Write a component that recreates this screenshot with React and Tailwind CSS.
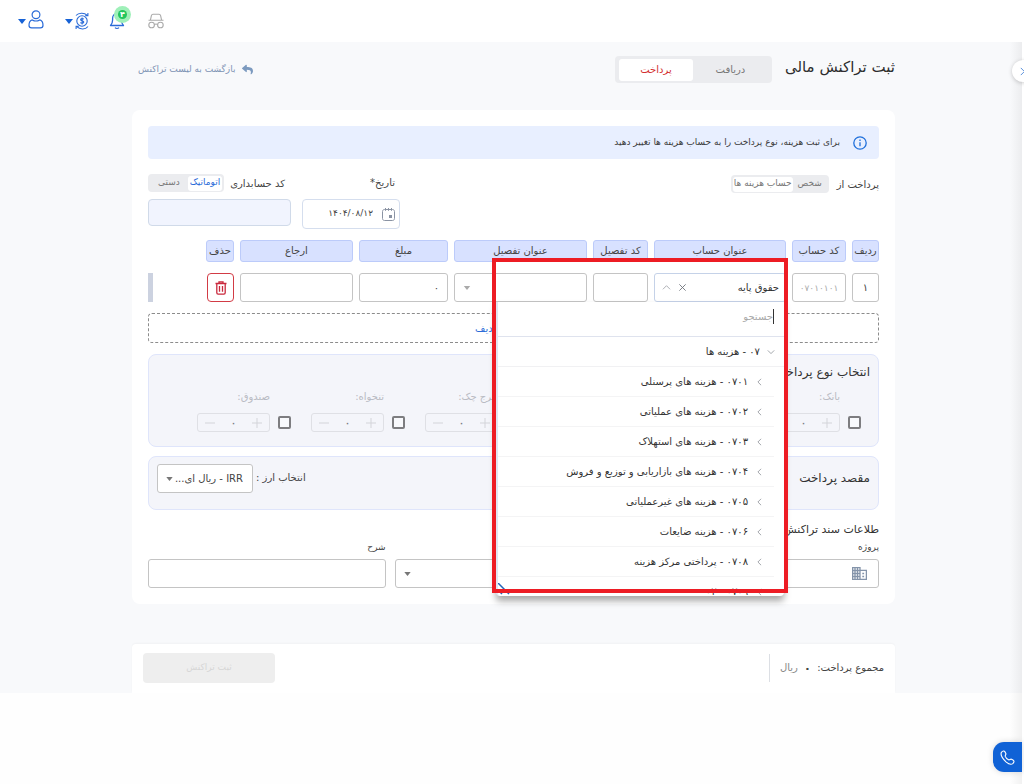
import React from "react";
import { FaReply } from "react-icons/fa";

const accounts = [
  "۰۷۰۱ - هزینه های پرسنلی",
  "۰۷۰۲ - هزینه های عملیاتی",
  "۰۷۰۳ - هزینه های استهلاک",
  "۰۷۰۴ - هزینه های بازاریابی و توزیع و فروش",
  "۰۷۰۵ - هزینه های غیرعملیاتی",
  "۰۷۰۶ - هزینه ضایعات",
  "۰۷۰۸ - پرداختی مرکز هزینه",
  "۰۷۰۹ - ۰۲",
];

const payTypes = ["بانک:", "چک:", "حواله:", "خرج چک:", "تنخواه:", "صندوق:"];

const fieldBox =
  "w-full rounded-[3px] border border-[#c4c4c4] bg-white text-[10px] text-[#444] outline-none";

function Caret({ className }) {
  return (
    <svg viewBox="0 0 8 5" className={className} aria-hidden="true">
      <path d="M0 0h8L4 5z" fill="currentColor" />
    </svg>
  );
}

function Chevron({ className, d = "M7 1 3 5l4 4" }) {
  return (
    <svg viewBox="0 0 10 10" className={className} fill="none" stroke="currentColor" strokeWidth="1" aria-hidden="true">
      <path d={d} />
    </svg>
  );
}

function TopBar() {
  return (
    <header dir="ltr" className="flex h-[42px] items-center bg-white pl-[18px] text-[#2a6bd8]">
      <button aria-label="حساب کاربری" className="flex items-center gap-[2px]">
        <Caret className="h-[5px] w-[8px] text-[#1762d6]" />
        <svg viewBox="0 0 16 20" className="-mt-[4px] h-[20px] w-[16px]" fill="none" stroke="currentColor" strokeWidth="1.2">
          <circle cx="8" cy="5.800" r="3.900" />
          <path d="M4.300 10.900C2 11.500 1 13.500 1 16.200c0 1.700.9 2.600 2.600 2.600h8.800c1.700 0 2.600-.9 2.600-2.600 0-2.700-1-4.700-3.300-5.300-2.200 1.300-5.200 1.300-7.400 0z" strokeLinejoin="round" />
        </svg>
      </button>
      <button aria-label="ارز" className="ml-[21px] flex items-center gap-[2px]">
        <Caret className="h-[5px] w-[8px] text-[#1762d6]" />
        <svg viewBox="0 0 14 18" className="h-[18px] w-[14px]" fill="none" stroke="currentColor" strokeWidth="1.1">
          <circle cx="7" cy="9" r="5.2" />
          <path d="M1 3.500C3.500.8 9 .2 12.300 3.300M12.900 1v2.600H10.300M13 14.500c-2.500 3.200-8 3.300-11.300.2M1.100 17v-2.600h2.600" />
          <path d="M8.700 7.200c-.4-.7-3.100-.9-3.100.5 0 1.600 3.200.8 3.200 2.400 0 1.400-2.900 1.300-3.400.3M7.100 5.400v7" />
        </svg>
      </button>
      <button aria-label="اعلان ها" className="relative ml-[20px] flex">
        <svg viewBox="0 0 16 20" className="-mt-[2px] h-[20px] w-[16px]" fill="none" stroke="currentColor" strokeWidth="1.300">
          <path d="M1.500 15.500C3 14 3.600 12.500 3.600 10V8.300C3.600 5.600 5.400 3.500 8 3.500s4.400 2.100 4.400 4.800V10c0 2.500.6 4 2.100 5.500z" strokeLinejoin="round" />
          <path d="M6 17.600c1 1 3 1 4 0" />
        </svg>
        <span className="absolute -top-[6px] left-[5px] flex h-[17px] w-[17px] items-center justify-center rounded-full bg-[#9ff0b9]">
          <span className="flex h-[9px] w-[9px] items-center justify-center rounded-full bg-[#22c55e] text-[8px] leading-none font-bold text-white">۴</span>
        </span>
      </button>
      <button aria-label="حالت ناشناس" className="ml-[23px] flex text-[#aaaaaa]">
        <svg viewBox="0 0 16 16" className="h-[16px] w-[16px]" fill="none" stroke="currentColor" strokeWidth="1.100">
          <path d="M.5 7.200h15M2.400 7.200l1-4.600c.2-.8.800-1.300 1.600-1.300h6c.8 0 1.400.5 1.600 1.300l1 4.600" />
          <circle cx="3.600" cy="12" r="2.800" />
          <circle cx="12.400" cy="12" r="2.800" />
          <path d="M6.400 11.700c.8-.7 2.400-.7 3.200 0" />
        </svg>
      </button>
    </header>
  );
}

function Stepper({ label }) {
  return (
    <div className="flex items-end gap-[8px]">
      <input type="checkbox" aria-label={label} className="mb-[3px] h-[13px] w-[13px] appearance-none rounded-[2px] border-2 border-[#7d7d80] bg-white/40" />
      <div className="flex w-[73px] flex-col gap-[8px]">
        <span className="text-[10px] leading-4 whitespace-nowrap text-[#b9bbc3]">{label}</span>
        <div className="flex h-[19px] items-center justify-between rounded-[3px] border border-[#dfe0e5] px-[7px] text-[#d3d4d9]">
          <button aria-label="افزایش" className="flex">
            <Chevron className="h-[10px] w-[10px]" d="M5 0v10M0 5h10" />
          </button>
          <span className="text-[12px] leading-none text-[#77787d]">۰</span>
          <button aria-label="کاهش" className="flex">
            <Chevron className="h-[10px] w-[10px]" d="M0 5h10" />
          </button>
        </div>
      </div>
    </div>
  );
}

function AccountMenu() {
  return (
    <div className="absolute top-[29px] right-[2px] z-20 h-[294px] w-[288px] overflow-hidden rounded-b-[4px] border-l-2 border-[#dfe6f2] bg-white shadow-[0_5px_7px_rgba(0,0,0,0.35)]">
      <div className="flex h-[35px] items-center border-b border-[#dfe3ee] pr-[10px] pb-[6px]">
        <span className="h-[15px] w-px bg-[#333]" />
        <input aria-label="جستجو" placeholder="جستجو" className="w-full text-[10px] outline-none placeholder:text-[#a9a9a9]" />
      </div>
      <ul className="text-[10px] text-[#333]">
        <li className="flex h-[30px] items-center gap-[7px] border-b border-[#f1f1f3] pr-[9px]">
          <Chevron className="h-[8px] w-[8px] text-[#8c9097]" d="M1 3l4 4 4-4" />
          ۰۷ - هزینه ها
        </li>
        {accounts.map((name) => (
          <li key={name} className="mr-[10px] flex h-[30px] items-center gap-[7px] border-b border-[#f4f4f5] pr-[10px]">
            <Chevron className="h-[8px] w-[9px] text-[#8c9097]" />
            {name}
          </li>
        ))}
      </ul>
      <svg viewBox="0 0 12 12" className="absolute bottom-[1px] left-0 h-[12px] w-[12px]" stroke="#2464b8" strokeWidth="1.500" aria-hidden="true">
        <path d="M0 0l11 11M0 7l4 4" />
      </svg>
    </div>
  );
}

const columns = [
  ["ردیف", "w-[27px]"],
  ["کد حساب", "w-[54px]"],
  ["عنوان حساب", "w-[132px]"],
  ["کد تفصیل", "w-[55px]"],
  ["عنوان تفصیل", "w-[133px]"],
  ["مبلغ", "w-[89px]"],
  ["ارجاع", "w-[113px]"],
  ["حذف", "w-[28px]"],
];

function EntryTable() {
  return (
    <div className="-mx-[6px] mt-[-1px]">
      <table className="w-full table-fixed border-separate border-spacing-x-[6px] border-spacing-y-[11px]">
        <thead>
          <tr>
            {columns.map(([name, width]) => (
              <th key={name} className={`${width} h-[22px] rounded-[3px] border border-[#bccbfa] bg-[#d8e1ff] p-0 text-[10px] leading-5 font-normal whitespace-nowrap text-[#444]`}>
                {name}
              </th>
            ))}
            <td />
          </tr>
        </thead>
        <tbody>
          <tr>
            <td className="p-0"><input aria-label="ردیف" defaultValue="۱" className={`${fieldBox} h-[29px] text-center`} /></td>
            <td className="p-0"><input aria-label="کد حساب" placeholder="۰۷۰۱۰۱۰۱" className={`${fieldBox} h-[29px] text-center placeholder:text-[9px] placeholder:text-[#aaa]`} /></td>
            <td className="p-0">
              <div className="relative">
                <div className="flex h-[29px] items-center rounded-[3px] border border-[#c5d2e8] pr-[6px] pl-[7px] text-[10px] text-[#333]">
                  <span className="flex-1">حقوق پایه</span>
                  <button aria-label="پاک کردن" className="flex text-[#6f747c]">
                    <Chevron className="h-[9px] w-[9px]" d="M1.500 1.500l7 7m0-7l-7 7" />
                  </button>
                  <button aria-label="بستن فهرست" className="mr-[7px] flex text-[#a5a8ae]">
                    <Chevron className="h-[9px] w-[9px]" d="M1 7l4-4 4 4" />
                  </button>
                </div>
                <AccountMenu />
                <div className="pointer-events-none absolute -top-[15px] -right-[2px] z-30 h-[335px] w-[296px] border-4 border-[#ed1c24]" />
              </div>
            </td>
            <td className="p-0"><input aria-label="کد تفصیل" className={`${fieldBox} h-[29px] px-2`} /></td>
            <td className="p-0">
              <div className={`${fieldBox} flex h-[29px] items-center px-2`}>
                <input aria-label="عنوان تفصیل" className="w-full outline-none" />
                <Caret className="h-[4px] w-[8px] shrink-0 text-[#aaa]" />
              </div>
            </td>
            <td className="p-0"><input aria-label="مبلغ" defaultValue="۰" className={`${fieldBox} h-[29px] px-2`} /></td>
            <td className="p-0"><input aria-label="ارجاع" className={`${fieldBox} h-[29px] px-2`} /></td>
            <td className="p-0">
              <button aria-label="حذف" className="flex h-[29px] w-[27px] items-center justify-center rounded-[4px] border border-[#d23b45] text-[#c9283c]">
                <svg viewBox="0 0 12 14" className="h-[14px] w-[12px]" fill="none" stroke="currentColor" strokeWidth="1.300">
                  <path d="M.5 2.500h11M4 2.300V.8h4v1.500M1.800 2.500v9.300c0 .8.500 1.300 1.300 1.300h5.800c.8 0 1.300-.5 1.300-1.300V2.500M4.500 5v5.800M7.500 5v5.800" />
                </svg>
              </button>
            </td>
            <td className="p-0"><div className="mr-auto h-[29px] w-[5px] bg-[#ccd2e0]" /></td>
          </tr>
        </tbody>
      </table>
    </div>
  );
}

export default function App() {
  return (
    <div dir="rtl" className="relative min-h-screen overflow-hidden bg-[#fefefe] font-['DejaVu_Sans',sans-serif] text-[10px] text-[#444]">
      <TopBar />
      <main className="bg-[#f8f9fb] pr-[129px] pl-[132px]">
        <div className="flex h-[68px] items-start pt-[14px]">
          <h1 className="text-[15px] leading-[22px] text-[#2d2d2d]">ثبت تراکنش مالی</h1>
          <div className="mr-[13px] flex h-[27px] w-[157px] items-center rounded-[4px] bg-[#ebecef] p-[4px]">
            <button className="h-full flex-1 text-[#777]">دریافت</button>
            <button className="h-[22px] w-[74px] rounded-[3px] bg-white text-[#d32f2f]">پرداخت</button>
          </div>
          <a href="#list" className="mr-auto ml-[6px] flex items-center gap-[7px] pt-[7px] text-[9px] text-[#7f94b5]">
            <FaReply className="h-[11px] w-[11px] text-[#7c9abf]" />
            بازگشت به لیست تراکنش
          </a>
        </div>

        <section className="rounded-[8px] bg-white px-[16px] pt-[16px] pb-[16px]">
          <div className="flex h-[33px] items-center gap-[13px] rounded-[4px] bg-[#e8efff] pr-[12px] text-[9px] text-[#3c3c3c]">
            <svg viewBox="0 0 14 14" className="h-[14px] w-[14px]" fill="none" stroke="#1f6fdb" strokeWidth="1.300" aria-hidden="true">
              <circle cx="7" cy="7" r="6.200" />
              <path d="M7 6.300v4M7 3.600v1.300" />
            </svg>
            برای ثبت هزینه، نوع پرداخت را به حساب هزینه ها تغییر دهید
          </div>

          <div className="mt-[15px] flex h-[56px] items-start gap-[11px]">
            <div className="flex flex-1 items-center gap-[8px] pt-px">
              <span>پرداخت از</span>
              <div className="flex h-[18px] w-[98px] items-center rounded-[4px] bg-[#ebecef] p-[2px] text-[9px] whitespace-nowrap text-[#777]">
                <button className="flex-1">شخص</button>
                <button className="h-[15px] w-[60px] rounded-[3px] bg-white">حساب هزینه ها</button>
              </div>
            </div>
            <div className="w-[98px]">
              <label htmlFor="date" className="mr-[5px] block leading-[18px]">تاریخ*</label>
              <div className="mt-[7px] flex h-[30px] items-center rounded-[4px] border border-[#d5deee] bg-white pr-[4px] pl-2">
                <svg viewBox="0 0 13 13" className="h-[13px] w-[13px] shrink-0" fill="none" stroke="#8a93a3" aria-hidden="true">
                  <path d="M2.500 1.500h8c1.200 0 2 .8 2 2v7c0 1.200-.8 2-2 2h-8c-1.200 0-2-.8-2-2v-7c0-1.200.8-2 2-2z" />
                  <path d="M3.500 0v2.800M6.500 0v2.800M9.500 0v2.800" />
                  <rect x="7.500" y="7.500" width="2" height="2" fill="#8a93a3" />
                </svg>
                <input id="date" defaultValue="۱۴۰۴/۰۸/۱۲" className="w-full pr-[9px] text-[9px] outline-none" />
              </div>
            </div>
            <div className="w-[143px]">
              <div className="flex items-center justify-between">
                <label htmlFor="code" className="mr-[6px] whitespace-nowrap">کد حسابداری</label>
                <div className="flex h-[18px] w-[76px] items-center rounded-[4px] bg-[#ebecef] p-[2px] text-[9px] whitespace-nowrap">
                  <button className="h-[15px] w-[34px] rounded-[3px] bg-white text-[#2a6bd8]">اتوماتیک</button>
                  <button className="flex-1 text-[#777]">دستی</button>
                </div>
              </div>
              <input id="code" className="mt-[7px] h-[27px] w-full rounded-[4px] border border-[#d0dae9] bg-[#f1f4fe] px-2 outline-none" />
            </div>
          </div>

          <EntryTable />

          <button className="block h-[30px] w-full rounded-[4px] border border-dashed border-[#8c8c8c] pl-[10px] text-[10px] text-[#2a6bd8]">
            + اضافه کردن ردیف
          </button>

          <div className="mt-[11px] h-[93px] rounded-[8px] border border-[#dfe5fb] bg-[#f4f5fa] px-[8px] pt-[8px]">
            <h2 className="text-[12px] leading-[18px] text-[#333]">انتخاب نوع پرداخت</h2>
            <div className="mt-[8px] flex gap-[20px] pr-[9px]">
              {payTypes.map((t) => <Stepper key={t} label={t} />)}
            </div>
          </div>

          <div className="mt-[9px] flex h-[54px] items-start rounded-[8px] border border-[#dfe5fb] bg-[#f4f5fa] px-[8px] pt-[7px]">
            <h2 className="flex-1 text-[12px] leading-[28px] text-[#333]">مقصد پرداخت</h2>
            <label htmlFor="currency" className="leading-[28px]">انتخاب ارز :</label>
            <div className="relative mr-[3px] w-[96px]">
              <select id="currency" className="h-[29px] w-full appearance-none rounded-[3px] border border-[#c4c4c4] bg-white pr-[9px] pl-4 text-[10px] outline-none">
                <option>IRR - ریال ای...</option>
              </select>
              <Caret className="absolute top-[13px] left-[9px] h-[4px] w-[7px] text-[#777]" />
            </div>
          </div>

          <h2 className="mt-[11px] text-[11px] leading-[18px] text-[#333]">طلاعات سند تراکنش</h2>
          <div className="grid grid-cols-3 items-end gap-[9px] text-[9px]">
            <div>
              <label htmlFor="project" className="block leading-[16px]">پروژه</label>
              <div className={`${fieldBox} mt-[4px] flex h-[29px] items-center pr-[11px]`}>
                <svg viewBox="0 0 15 13" className="h-[13px] w-[15px] shrink-0" fill="none" stroke="#8494aa" strokeWidth="1.300" aria-hidden="true">
                  <path d="M.6.600h7.400v11.800H.6zM8 3.400h6.400v9H8M.6 3.500H8M.6 6.500H8M.6 9.500H8M3 .6v11.800M5.500.6v11.800M10.300 6.500h1.800M10.300 9.500h1.800" />
                </svg>
                <input id="project" className="w-full outline-none" />
              </div>
            </div>
            <div className={`${fieldBox} flex h-[29px] items-center px-2`}>
              <input aria-label="مرکز هزینه" className="w-full outline-none" />
              <Caret className="h-[4px] w-[7px] shrink-0 text-[#777]" />
            </div>
            <div>
              <label htmlFor="note" className="block leading-[16px]">شرح</label>
              <input id="note" className={`${fieldBox} mt-[4px] h-[29px] px-2`} />
            </div>
          </div>
        </section>

        <footer className="mt-[40px] flex h-[49px] items-center rounded-t-[4px] bg-white pr-[11px] pb-[2px] pl-[11px] shadow-[0_-1px_2px_rgba(0,0,0,0.03)]">
          <div className="flex h-[28px] items-center gap-[6px] border-l border-[#dcdfe4] pl-[10px]">
            <span>مجموع پرداخت:</span>
            <b className="text-[12px]">۰</b>
            <span className="text-[#888]">ریال</span>
          </div>
          <button disabled className="mr-auto h-[30px] w-[132px] rounded-[4px] bg-[#eeeeee] text-[9px] text-[#d6d6d6]">ثبت تراکنش</button>
        </footer>
      </main>

      <div className="pointer-events-none absolute top-[42px] right-0 bottom-0 w-[14px] border-r-2 border-white bg-linear-to-r from-transparent to-black/5" />
      <button aria-label="باز کردن منو" className="absolute top-[60px] -right-[10px] flex h-[22px] w-[22px] items-center rounded-full bg-white pr-[6px] text-[#4a86d8] shadow-[0_1px_4px_rgba(0,0,0,0.2)]">
        <Chevron className="h-[9px] w-[9px]" d="M2 1l4 4-4 4" />
      </button>
      <button aria-label="تماس" className="absolute right-[2px] bottom-[12px] flex h-[30px] w-[29px] items-center justify-center rounded-l-[11px] bg-[#1062d6] text-white shadow-[0_0_6px_rgba(0,0,0,0.15)]">
        <svg viewBox="0 0 16 16" className="h-[15px] w-[15px]" fill="none" stroke="currentColor" strokeWidth="1.200" strokeLinejoin="round">
          <path d="M1.500 2.500C3 .7 4.500.6 5.500 2.300l.7 1.500c.5 1.100-1 1.900-.6 3 .6 1.500 2 2.900 3.500 3.600 1.200.5 2-1.100 3.100-.6l1.600.8c1.600 1 1.500 2.400-.2 3.900-1.500 1.100-4.300.6-7.200-1.900C3 9.500.2 5.500 1.500 2.500z" />
        </svg>
      </button>
    </div>
  );
}
